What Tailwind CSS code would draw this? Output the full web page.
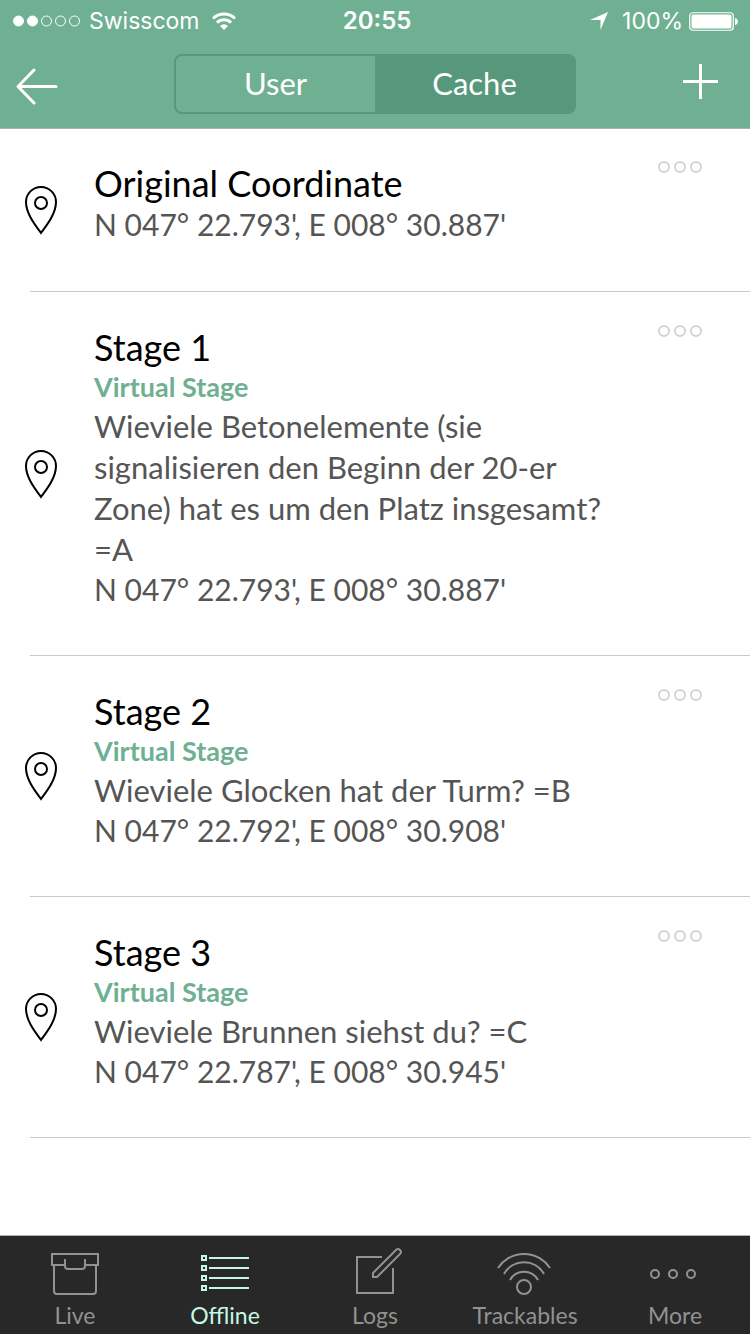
<!DOCTYPE html>
<html lang="en">
<head>
<meta charset="utf-8">
<meta name="viewport" content="width=device-width, initial-scale=1">
<title>Waypoints</title>
<script src="https://cdn.jsdelivr.net/npm/@tailwindcss/browser@4"></script>
</head>
<body class="flex min-h-screen flex-col bg-white font-['Lato',sans-serif] text-[#555]">
<svg class="hidden" aria-hidden="true">
  <symbol id="pin" viewBox="0 0 34 50"><path d="M17 48C12 41 2 29 2 17a15 15 0 0 1 30 0c0 12-10 24-15 31Z"/><circle cx="17" cy="18" r="6"/></symbol>
  <symbol id="dots" viewBox="0 0 46 14"><circle cx="7" cy="7" r="5"/><circle cx="23" cy="7" r="5"/><circle cx="39" cy="7" r="5"/></symbol>
</svg>

<header class="border-b border-[#a9b3ae] bg-[#6fb093] text-white">
  <div class="grid h-[42px] grid-cols-3 items-center px-3 font-['Inter',sans-serif] text-[23px]">
    <div class="flex items-center gap-2">
      <svg class="h-3 w-[69px]" viewBox="0 0 69 12" fill="none" stroke="#fff"><g fill="#fff"><circle cx="6.500" cy="6" r="5"/><circle cx="20.500" cy="6" r="5"/></g><circle cx="34.500" cy="6" r="5"/><circle cx="48.500" cy="6" r="5"/><circle cx="62.500" cy="6" r="5"/></svg>
      <span>Swisscom</span>
      <svg class="ml-1 h-[18px] w-6" viewBox="0 0 24 18" fill="none" stroke="#fff" stroke-width="3"><path d="M1 6.500a15.600 15.600 0 0 1 22 0M5 10.600a10 10 0 0 1 14 0"/><path d="M12 18l-4-4a5.700 5.700 0 0 1 8 0Z" fill="#fff" stroke="none"/></svg>
    </div>
    <div class="pl-1 text-center text-2xl font-semibold">20:55</div>
    <div class="flex items-center justify-end gap-1.5">
      <svg class="mr-2 h-[18px] w-[18px]" viewBox="0 0 18 18" fill="#fff"><path d="M18 0 10.500 18V8H0Z"/></svg>
      <span>100%</span>
      <svg class="h-[19px] w-[49px] shrink-0" viewBox="0 0 49 19"><rect x=".75" y=".75" width="43.500" height="17.500" rx="3" fill="none" stroke="#fff" stroke-width="1.200"/><rect x="2.500" y="2.500" width="40" height="14" rx="1.500" fill="#fff"/><path d="M46 6c4 1 4 6 0 7Z" fill="#fff"/></svg>
    </div>
  </div>
  <div class="flex h-[86px] items-start justify-between px-4 pt-3">
    <button class="w-16" aria-label="Back"><svg class="mt-3 h-10 w-11" viewBox="0 0 44 40" fill="none" stroke="#fff" stroke-width="3" stroke-linecap="round" stroke-linejoin="round"><path d="M40 20.500H2M18 4 2 20.500 18 37"/></svg></button>
    <div class="grid h-15 w-[402px] grid-cols-2 overflow-hidden rounded-lg border-2 border-[#57987c] text-[31px]">
      <button class="pb-0.5">User</button>
      <button class="bg-[#57987c] pb-0.5" aria-pressed="true">Cache</button>
    </div>
    <button class="flex w-16 justify-end pt-2.5 pr-4" aria-label="Add"><svg class="h-9 w-9" viewBox="0 0 36 36" stroke="#fff" stroke-width="3"><path d="M18.500 0v35M1 17.500h35"/></svg></button>
  </div>
</header>

<main class="-mt-px grow">
  <article class="ml-[30px] flex min-h-[164px] border-b border-[#c8c7cc]">
    <div class="-ml-1.5 flex w-[70px] shrink-0 items-center"><svg class="h-[50px] w-[34px] fill-none stroke-black stroke-2"><use href="#pin"/></svg></div>
    <div class="min-w-0 grow pt-[34px] pb-[46px] text-[31px]/[41px]">
      <h2 class="text-[36px]/[42px] text-black">Original Coordinate</h2>
      <p class="text-[30px]/[41px]">N 047° 22.793', E 008° 30.887'</p>
    </div>
    <button class="mt-8 mr-[47px] h-3.5 w-[46px] shrink-0" aria-label="Options for Original Coordinate"><svg class="h-3.5 w-[46px] fill-none stroke-[#d4d4d4] stroke-2"><use href="#dots"/></svg></button>
  </article>

  <article class="ml-[30px] flex border-b border-[#c8c7cc]">
    <div class="-ml-1.5 flex w-[70px] shrink-0 items-center"><svg class="h-[50px] w-[34px] fill-none stroke-black stroke-2"><use href="#pin"/></svg></div>
    <div class="min-w-0 grow pt-[34px] pb-[46px] text-[31px]/[41px]">
      <h2 class="text-[36px]/[42px] text-black">Stage 1</h2>
      <p class="text-[27px]/[38px] font-bold text-[#6fb093]">Virtual Stage</p>
      <p class="max-w-[520px]">Wieviele Betonelemente (sie signalisieren den Beginn der 20-er Zone) hat es um den Platz insgesamt? =A</p>
      <p class="text-[30px]/[39px]">N 047° 22.793', E 008° 30.887'</p>
    </div>
    <button class="mt-8 mr-[47px] h-3.5 w-[46px] shrink-0" aria-label="Options for Stage 1"><svg class="h-3.5 w-[46px] fill-none stroke-[#d4d4d4] stroke-2"><use href="#dots"/></svg></button>
  </article>

  <article class="ml-[30px] flex border-b border-[#c8c7cc]">
    <div class="-ml-1.5 flex w-[70px] shrink-0 items-center"><svg class="h-[50px] w-[34px] fill-none stroke-black stroke-2"><use href="#pin"/></svg></div>
    <div class="min-w-0 grow pt-[34px] pb-[46px] text-[31px]/[41px]">
      <h2 class="text-[36px]/[42px] text-black">Stage 2</h2>
      <p class="text-[27px]/[38px] font-bold text-[#6fb093]">Virtual Stage</p>
      <p class="max-w-[520px]">Wieviele Glocken hat der Turm? =B</p>
      <p class="text-[30px]/[39px]">N 047° 22.792', E 008° 30.908'</p>
    </div>
    <button class="mt-8 mr-[47px] h-3.5 w-[46px] shrink-0" aria-label="Options for Stage 2"><svg class="h-3.5 w-[46px] fill-none stroke-[#d4d4d4] stroke-2"><use href="#dots"/></svg></button>
  </article>

  <article class="ml-[30px] flex border-b border-[#c8c7cc]">
    <div class="-ml-1.5 flex w-[70px] shrink-0 items-center"><svg class="h-[50px] w-[34px] fill-none stroke-black stroke-2"><use href="#pin"/></svg></div>
    <div class="min-w-0 grow pt-[34px] pb-[46px] text-[31px]/[41px]">
      <h2 class="text-[36px]/[42px] text-black">Stage 3</h2>
      <p class="text-[27px]/[38px] font-bold text-[#6fb093]">Virtual Stage</p>
      <p class="max-w-[520px]">Wieviele Brunnen siehst du? =C</p>
      <p class="text-[30px]/[39px]">N 047° 22.787', E 008° 30.945'</p>
    </div>
    <button class="mt-8 mr-[47px] h-3.5 w-[46px] shrink-0" aria-label="Options for Stage 3"><svg class="h-3.5 w-[46px] fill-none stroke-[#d4d4d4] stroke-2"><use href="#dots"/></svg></button>
  </article>
</main>

<nav class="grid grid-cols-5 border-t border-[#a9b3ae] bg-[#282828] pt-2.5 pb-0.5 text-[23px]/[34px] text-[#929292]">
  <a href="#live" class="flex flex-col items-center">
    <svg class="h-[52px] w-14" viewBox="0 0 56 52" fill="none" stroke="currentColor" stroke-width="2"><path d="M18 19H5V8h46v11H38M18 13v7q0 3 3 3h14q3 0 3-3v-7M7 19v26q0 3 3 3h36q3 0 3-3V19"/></svg>
    Live</a>
  <a href="#offline" class="flex flex-col items-center text-[#c5f8e2]" aria-current="page">
    <svg class="h-[52px] w-14" viewBox="0 0 56 52" fill="none" stroke="currentColor" stroke-width="2"><path d="M5 10h4v4H5ZM5 20h4v4H5ZM5 30h4v4H5ZM5 40h4v4H5ZM12 12h40M12 22h40M12 32h40M12 42h40"/></svg>
    Offline</a>
  <a href="#logs" class="flex flex-col items-center">
    <svg class="h-[52px] w-14" viewBox="0 0 56 52" fill="none" stroke="currentColor" stroke-width="2"><path d="M35 11H10v36h36V22M26 31v-4L49 4a2.800 2.800 0 0 1 4 4L30 31Z"/></svg>
    Logs</a>
  <a href="#trackables" class="flex flex-col items-center">
    <svg class="h-[52px] w-14" viewBox="0 0 56 52" fill="none" stroke="currentColor" stroke-width="2"><circle cx="27" cy="41" r="7"/><path d="M13 34a16 16 0 0 1 28 0M7 28a23 23 0 0 1 40 0M1 22a31 31 0 0 1 52 0"/></svg>
    Trackables</a>
  <a href="#more" class="flex flex-col items-center">
    <svg class="h-[52px] w-14" viewBox="0 0 56 52" fill="none" stroke="currentColor" stroke-width="2"><circle cx="8" cy="28" r="4"/><circle cx="26" cy="28" r="4"/><circle cx="44" cy="28" r="4"/></svg>
    More</a>
</nav>
</body>
</html>
